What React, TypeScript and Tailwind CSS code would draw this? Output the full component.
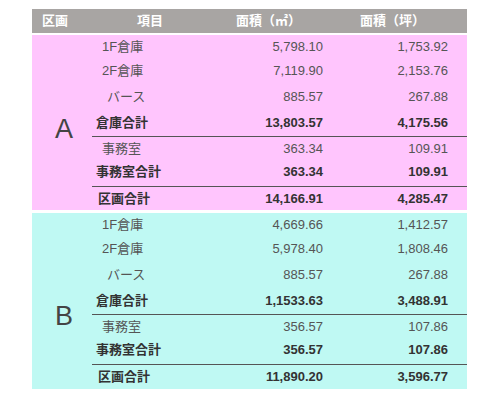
const FONT = { fontFamily: '"Liberation Sans", "Noto Sans CJK JP", sans-serif' };

type Row = {
  label: string;
  sqm: string;
  tsubo: string;
  bold?: boolean;
  cls: string; // height / border for this row
  pad?: string;
};

const rowsA: Row[] = [
  { label: "1F倉庫", sqm: "5,798.10", tsubo: "1,753.92", cls: "h-[23px]", pad: "pl-[10px]" },
  { label: "2F倉庫", sqm: "7,119.90", tsubo: "2,153.76", cls: "h-[26px]", pad: "pl-[10px]" },
  { label: "バース", sqm: "885.57", tsubo: "267.88", cls: "h-[25px]", pad: "pl-[15px]" },
  { label: "倉庫合計", sqm: "13,803.57", tsubo: "4,175.56", bold: true, cls: "h-[28px] border-b border-[#555]" },
  { label: "事務室", sqm: "363.34", tsubo: "109.91", cls: "h-[24px]", pad: "pl-[10px]" },
  { label: "事務室合計", sqm: "363.34", tsubo: "109.91", bold: true, cls: "h-[26px] pb-1 border-b border-[#555]" },
  { label: "区画合計", sqm: "14,166.91", tsubo: "4,285.47", bold: true, cls: "h-[23px]", pad: "pl-[6px]" },
];

const rowsB: Row[] = [
  { label: "1F倉庫", sqm: "4,669.66", tsubo: "1,412.57", cls: "h-[23px]", pad: "pl-[10px]" },
  { label: "2F倉庫", sqm: "5,978.40", tsubo: "1,808.46", cls: "h-[26px]", pad: "pl-[10px]" },
  { label: "バース", sqm: "885.57", tsubo: "267.88", cls: "h-[25px]", pad: "pl-[15px]" },
  { label: "倉庫合計", sqm: "1,1533.63", tsubo: "3,488.91", bold: true, cls: "h-[28px] border-b border-[#555]" },
  { label: "事務室", sqm: "356.57", tsubo: "107.86", cls: "h-[24px]", pad: "pl-[10px]" },
  { label: "事務室合計", sqm: "356.57", tsubo: "107.86", bold: true, cls: "h-[26px] pb-1 border-b border-[#555]" },
  { label: "区画合計", sqm: "11,890.20", tsubo: "3,596.77", bold: true, cls: "h-[24px]", pad: "pl-[6px]" },
];

function Section({
  letter,
  rows,
  bg,
  letterPad,
}: {
  letter: string;
  rows: Row[];
  bg: string;
  letterPad: string;
}) {
  return (
    <div className={`flex ${bg}`}>
      <div className={`w-[60px] shrink-0 pl-[23px] ${letterPad}`}>
        <span className="block text-[27px] leading-none text-[#444]">{letter}</span>
      </div>
      <div className="flex-1 flex flex-col">
        {rows.map((r) => (
          <div
            key={r.label}
            className={`flex items-center text-[13px] ${r.cls} ${
              r.bold ? "font-bold text-[#333]" : "text-[#555]"
            }`}
          >
            <div className={`w-[158px] ${r.pad ?? "pl-[4px]"}`}>{r.label}</div>
            <div className="w-[73px] text-right">{r.sqm}</div>
            <div className="w-[125px] text-right">{r.tsubo}</div>
          </div>
        ))}
      </div>
    </div>
  );
}

export default function App() {
  return (
    <div className="w-[500px] h-[400px] bg-white pt-[9px] pl-[32px]" style={FONT}>
      <div className="w-[435px] flex flex-col">
        <div className="h-[24px] flex items-center bg-[#a8a5a3] text-white font-bold text-[13px]">
          <div className="w-[60px] pl-[10px]">区画</div>
          <div className="w-[116px] text-center">項目</div>
          <div className="w-[132px] pl-[28px]">面積（㎡）</div>
          <div className="flex-1 pl-[20px]">面積（坪）</div>
        </div>
        <div className="h-[2px]" />
        <Section letter="A" rows={rowsA} bg="bg-[#ffc5fd]" letterPad="pt-[81px]" />
        <div className="h-[3px]" />
        <Section letter="B" rows={rowsB} bg="bg-[#bff9f3]" letterPad="pt-[90px]" />
      </div>
    </div>
  );
}
